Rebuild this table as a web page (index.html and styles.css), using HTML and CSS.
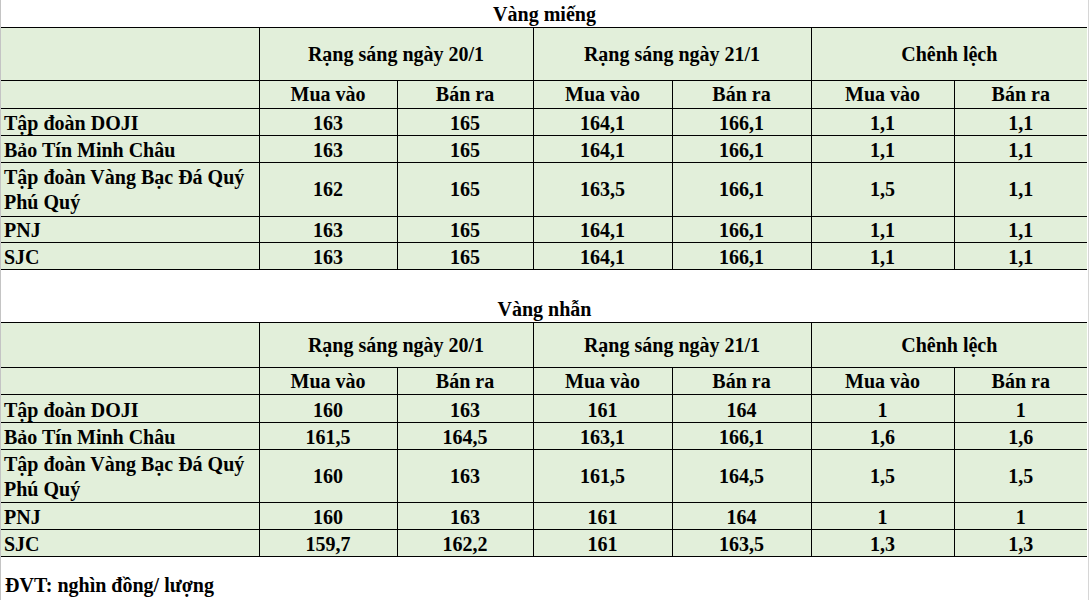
FILE: index.html
```html
<!DOCTYPE html>
<html>
<head>
<meta charset="utf-8">
<link rel="stylesheet" href="styles.css">
</head>
<body>
<div class="page">
  <div class="title">Vàng miếng</div>
  <table class="price t1">
    <colgroup>
      <col class="c0"><col class="c1"><col class="c2"><col class="c3"><col class="c4"><col class="c5"><col class="c6">
    </colgroup>
    <tr class="h1"><td class="name"></td><td colspan="2">Rạng sáng ngày 20/1</td><td colspan="2">Rạng sáng ngày 21/1</td><td colspan="2">Chênh lệch</td></tr>
    <tr class="h2"><td class="name"></td><td>Mua vào</td><td>Bán ra</td><td>Mua vào</td><td>Bán ra</td><td>Mua vào</td><td>Bán ra</td></tr>
    <tr class="r ra"><td class="name">Tập đoàn DOJI</td><td>163</td><td>165</td><td>164,1</td><td>166,1</td><td>1,1</td><td>1,1</td></tr>
    <tr class="r rb"><td class="name">Bảo Tín Minh Châu</td><td>163</td><td>165</td><td>164,1</td><td>166,1</td><td>1,1</td><td>1,1</td></tr>
    <tr class="r2"><td class="name">Tập đoàn Vàng Bạc Đá Quý Phú Quý</td><td>162</td><td>165</td><td>163,5</td><td>166,1</td><td>1,5</td><td>1,1</td></tr>
    <tr class="r rc"><td class="name">PNJ</td><td>163</td><td>165</td><td>164,1</td><td>166,1</td><td>1,1</td><td>1,1</td></tr>
    <tr class="r rd"><td class="name">SJC</td><td>163</td><td>165</td><td>164,1</td><td>166,1</td><td>1,1</td><td>1,1</td></tr>
  </table>
  <div class="title second">Vàng nhẫn</div>
  <table class="price t2">
    <colgroup>
      <col class="c0"><col class="c1"><col class="c2"><col class="c3"><col class="c4"><col class="c5"><col class="c6">
    </colgroup>
    <tr class="h1"><td class="name"></td><td colspan="2">Rạng sáng ngày 20/1</td><td colspan="2">Rạng sáng ngày 21/1</td><td colspan="2">Chênh lệch</td></tr>
    <tr class="h2"><td class="name"></td><td>Mua vào</td><td>Bán ra</td><td>Mua vào</td><td>Bán ra</td><td>Mua vào</td><td>Bán ra</td></tr>
    <tr class="r ra"><td class="name">Tập đoàn DOJI</td><td>160</td><td>163</td><td>161</td><td>164</td><td>1</td><td>1</td></tr>
    <tr class="r rb"><td class="name">Bảo Tín Minh Châu</td><td>161,5</td><td>164,5</td><td>163,1</td><td>166,1</td><td>1,6</td><td>1,6</td></tr>
    <tr class="r2"><td class="name">Tập đoàn Vàng Bạc Đá Quý Phú Quý</td><td>160</td><td>163</td><td>161,5</td><td>164,5</td><td>1,5</td><td>1,5</td></tr>
    <tr class="r rc"><td class="name">PNJ</td><td>160</td><td>163</td><td>161</td><td>164</td><td>1</td><td>1</td></tr>
    <tr class="r rd"><td class="name">SJC</td><td>159,7</td><td>162,2</td><td>161</td><td>163,5</td><td>1,3</td><td>1,3</td></tr>
  </table>
  <div class="note">ĐVT: nghìn đồng/ lượng</div>
</div>
</body>
</html>
```
FILE: styles.css
```css
html, body {
  margin: 0;
  padding: 0;
  background: #fff;
}
body {
  font-family: "Liberation Serif", "Times New Roman", serif;
  font-weight: bold;
  font-size: 20px;
  color: #000;
}
.page {
  width: 1087px;
  height: 600px;
  border-left: 1px solid #c4c4c4;
  border-right: 1px solid #d6d6d6;
}
.title {
  text-align: center;
  height: 27px;
  line-height: 28px;
}
.title.second {
  margin-top: 25px;
  height: 27px;
  line-height: 28px;
}
.price {
  width: 1086px;
  table-layout: fixed;
  border-collapse: collapse;
  background: #e2efda;
}
.c0 { width: 258px; }
.c1 { width: 138px; }
.c2 { width: 136px; }
.c3 { width: 139px; }
.c4 { width: 139px; }
.c5 { width: 143px; }
.c6 { width: 133px; }
.price td {
  border: 1px solid #000;
  text-align: center;
  vertical-align: middle;
  padding: 0 2px;
  line-height: 23px;
  white-space: nowrap;
}
.price td:first-child { border-left: none; }
.price td:last-child { border-right: none; }
.price td.name {
  text-align: left;
  padding-left: 3px;
  white-space: normal;
}
.price .r td { vertical-align: bottom; }
.price .r2 td.name { line-height: 25px; padding-top: 1px; }

/* table 1 row heights */
.t1 .h1 td { height: 52px; }
.t1 .h2 td { height: 27px; }
.t1 .ra td { height: 26px; }
.t1 .rb td { height: 26px; }
.t1 .r2 td { height: 53px; }
.t1 .rc td { height: 25px; }
.t1 .rd td { height: 26px; }
.t1 .r2 td.name { height: 52px; }

/* table 2 row heights */
.t2 .h1 td { height: 44px; }
.t2 .h2 td { height: 26px; }
.t2 .ra td { height: 27px; }
.t2 .rb td { height: 26px; }
.t2 .r2 td { height: 52px; }
.t2 .rc td { height: 26px; }
.t2 .rd td { height: 26px; }
.t2 .r2 td.name { height: 51px; }

.note {
  padding-left: 4px;
  margin-top: 17px;
  line-height: 23px;
}
```
